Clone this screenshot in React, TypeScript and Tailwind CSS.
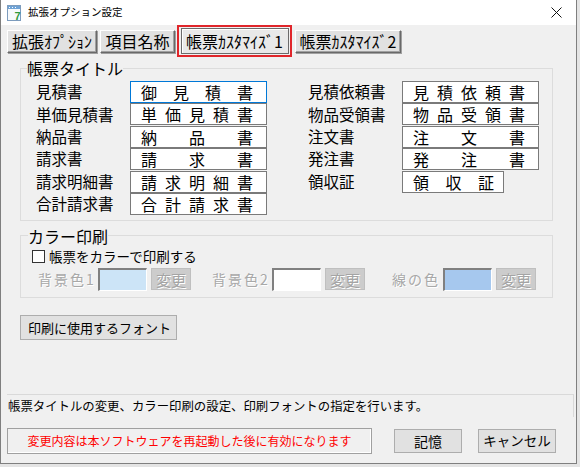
import React from 'react';

const leftRows: { label: string; text: string; focused?: boolean }[] = [
  { label: '見積書', text: '御見積書', focused: true },
  { label: '単価見積書', text: '単価見積書' },
  { label: '納品書', text: '納品書' },
  { label: '請求書', text: '請求書' },
  { label: '請求明細書', text: '請求明細書' },
  { label: '合計請求書', text: '合計請求書' },
];

const rightRows: { label: string; text: string; narrow?: boolean }[] = [
  { label: '見積依頼書', text: '見積依頼書' },
  { label: '物品受領書', text: '物品受領書' },
  { label: '注文書', text: '注文書' },
  { label: '発注書', text: '発注書' },
  { label: '領収証', text: '領収証', narrow: true },
];

function TitleBox({ text, focused, narrow }: { text: string; focused?: boolean; narrow?: boolean }) {
  return (
    <div
      className={`flex h-[22px] items-center justify-between border bg-white pl-[10px] text-[16px] leading-none ${
        narrow ? 'w-[102px] pr-[9px]' : 'w-[137px] pr-[13px]'
      } ${focused ? 'border-[#0078d7]' : 'border-[#7a7a7a]'}`}
    >
      {text.split('').map((c, i) => (
        <span key={i}>{c}</span>
      ))}
    </div>
  );
}

function Row({ label, children }: { label: string; children: React.ReactNode }) {
  return (
    <div className="flex h-[22px] items-center">
      <span className="w-[94px] text-[15.5px] leading-none">{label}</span>
      {children}
    </div>
  );
}

function TabButton({ label, w }: { label: string; w: string }) {
  return (
    <button
      className={`flex h-[23px] ${w} items-center justify-center border border-t-white border-l-white border-r-[#696969] border-b-[#696969] bg-[#e1e1e1] text-[16px] leading-none shadow-[inset_-1px_-1px_0_#a0a0a0,1px_1px_0_#a0a0a0]`}
    >
      {label}
    </button>
  );
}

function ColorField({ label, labelW, swatch }: { label: string; labelW: string; swatch: string }) {
  return (
    <div className="flex items-center">
      <span
        className={`${labelW} whitespace-nowrap text-[14px] leading-none tracking-[2px] text-[#a8a8a8] [text-shadow:1px_1px_0_#fff]`}
      >
        {label}
      </span>
      <div className={`h-[23px] w-[49px] border-t-2 border-l-2 border-b border-r border-t-[#808080] border-l-[#808080] border-b-white border-r-white ${swatch}`} />
      <div className="ml-[4px] flex h-[22px] w-[40px] items-center justify-center border border-[#bfbfbf] bg-[#cccccc] text-[15px] leading-none text-[#a4a4a4] [text-shadow:1px_1px_0_#fff]">
        変更
      </div>
    </div>
  );
}

export default function App() {
  return (
    <div className="h-[467px] w-[580px] overflow-hidden bg-[#e4e4e4] text-black [font-family:'Noto_Sans_CJK_JP','Noto_Sans',sans-serif]">
      <div className="flex h-[464px] w-[577px] flex-col border-x border-b border-[#7f7f7f] bg-[#f0f0f0]">
        {/* title bar */}
        <div className="flex h-[25px] items-center bg-white pl-[6px] pr-[10px]">
          <svg width="14" height="16" viewBox="0 0 14 16" className="shrink-0">
            <rect x="0.5" y="0.5" width="13" height="15" fill="#f6f9fc" stroke="#7d9cbd" />
            <rect x="1" y="1" width="12" height="3" fill="#6fa3d6" />
            <rect x="2" y="2" width="1" height="1" fill="#fff" />
            <rect x="5" y="2" width="1" height="1" fill="#fff" />
            <rect x="8" y="2" width="1" height="1" fill="#fff" />
            <text x="7.5" y="14.5" fontSize="11" fontWeight="bold" fill="#2f9a3c" fontFamily="Liberation Sans, sans-serif">
              7
            </text>
          </svg>
          <span className="ml-[7px] text-[10.5px] leading-none">拡張オプション設定</span>
          <svg width="11" height="11" viewBox="0 0 11 11" className="ml-auto mr-[4px]">
            <path d="M0.5 0.5L10.5 10.5M10.5 0.5L0.5 10.5" stroke="#111" strokeWidth="1" />
          </svg>
        </div>

        {/* tabs */}
        <div className="flex h-[32px] items-center pl-[6px]">
          <TabButton label="拡張ｵﾌﾟｼｮﾝ" w="w-[90px]" />
          <div className="ml-[3px]">
            <TabButton label="項目名称" w="w-[75px]" />
          </div>
          <div className="ml-[2px] flex h-[32px] w-[115px] items-center justify-center border-2 border-[#e0262b]">
            <div className="flex h-[26px] w-[108px] items-center justify-center border border-[#6b6b6b] bg-[#e9e9e9] text-[16px] leading-none shadow-[inset_1px_1px_0_#fff]">
              帳票ｶｽﾀﾏｲｽﾞ1
            </div>
          </div>
          <div className="ml-[3px]">
            <TabButton label="帳票ｶｽﾀﾏｲｽﾞ2" w="w-[106px]" />
          </div>
        </div>

        {/* 帳票タイトル */}
        <fieldset className="ml-[19px] mt-[2px] w-[533px] border border-[#dcdcdc] pb-[5px]">
          <legend className="ml-[6px] h-[18px] text-[16px] leading-[18px]">帳票タイトル</legend>
          <div className="mt-[4px] flex gap-[41px] pl-[15px]">
            <div className="flex flex-col gap-[0.4px]">
              {leftRows.map((r) => (
                <Row key={r.label} label={r.label}>
                  <TitleBox text={r.text} focused={r.focused} />
                </Row>
              ))}
            </div>
            <div className="flex flex-col gap-[0.4px]">
              {rightRows.map((r) => (
                <Row key={r.label} label={r.label}>
                  <TitleBox text={r.text} narrow={r.narrow} />
                </Row>
              ))}
            </div>
          </div>
        </fieldset>

        {/* カラー印刷 */}
        <fieldset className="ml-[19px] mt-[6px] w-[533px] border border-[#dcdcdc] pb-[6px]">
          <legend className="ml-[7px] h-[18px] text-[16px] leading-[18px]">カラー印刷</legend>
          <div className="mt-[4px] flex h-[16px] items-center pl-[11px]">
            <div className="h-[13px] w-[13px] border border-[#333] bg-white" />
            <span className="ml-[4px] text-[13.5px] leading-none">帳票をカラーで印刷する</span>
          </div>
          <div className="mt-[3px] flex items-center pl-[17px]">
            <ColorField label="背景色1" labelW="w-[60px]" swatch="bg-[#cce4f7]" />
            <div className="ml-[21px]">
              <ColorField label="背景色2" labelW="w-[60px]" swatch="bg-white" />
            </div>
            <div className="ml-[27px]">
              <ColorField label="線の色" labelW="w-[51px]" swatch="bg-[#a6c8ee]" />
            </div>
          </div>
        </fieldset>

        <button className="ml-[19px] mt-[17px] flex h-[25px] w-[157px] items-center border border-[#adadad] bg-[#e1e1e1] pl-[7px] text-[13px] leading-none">
          印刷に使用するフォント
        </button>

        {/* status */}
        <div className="ml-[6px] mt-[54px] flex h-[24px] w-[567px] items-center border-t border-[#d9d9d9]">
          <span className="pl-[1px] text-[12.4px] leading-none">
            帳票タイトルの変更、カラー印刷の設定、印刷フォントの指定を行います。
          </span>
          <div className="ml-auto h-[22px] w-px bg-[#d9d9d9]" />
        </div>

        <div className="ml-[6px] mt-[10px] flex items-center">
          <div className="flex h-[26px] w-[365px] items-center justify-center border border-[#a0a0a0] text-[12px] leading-none text-[#ff0000] shadow-[inset_-1px_-1px_0_#fff]">
            変更内容は本ソフトウェアを再起動した後に有効になります
          </div>
          <button className="ml-[22px] flex h-[24px] w-[68px] items-center justify-center border border-[#adadad] bg-[#e1e1e1] text-[14px] leading-none">
            記憶
          </button>
          <button className="ml-[16px] flex h-[24px] w-[78px] items-center justify-center border border-[#adadad] bg-[#e1e1e1] text-[13.5px] leading-none">
            キャンセル
          </button>
        </div>
      </div>
    </div>
  );
}
